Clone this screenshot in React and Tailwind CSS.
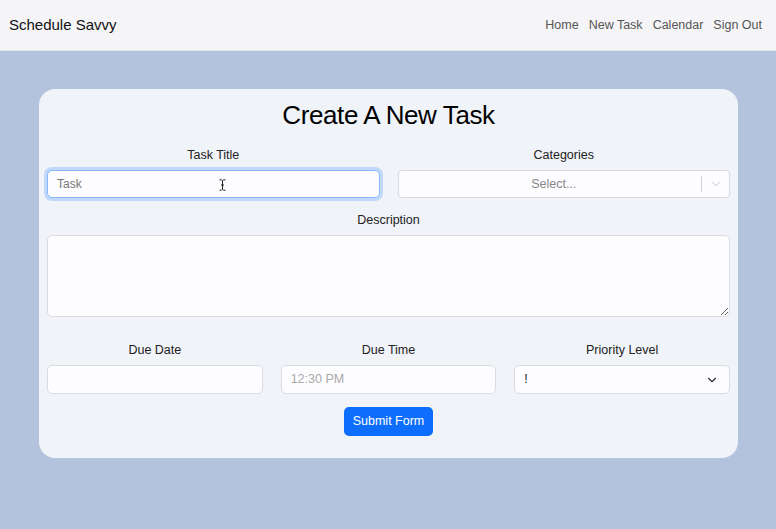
import React from 'react';
import { ChevronDown } from 'lucide-react';

const font = { fontFamily: '"Liberation Sans", Arial, sans-serif' };

function Label({ children }) {
  return <label className="block text-center text-[12.5px] text-[#222] mb-[6px] leading-[18px]">{children}</label>;
}

function IBeam() {
  return (
    <svg width="7" height="12" viewBox="0 0 7 12" className="absolute left-[171px] top-[8px]">
      <path d="M0.5 0.8h2l1 1 1-1h2M3.5 1.8v8.4M0.5 11.2h2l1-1 1 1h2M2 6h3" stroke="#222" strokeWidth="1" fill="none" />
    </svg>
  );
}

export default function App() {
  return (
    <div style={font} className="min-h-[529px] bg-[#b3c3dd]">
      <nav className="h-[51px] bg-[#f5f5f7] flex items-center justify-between pl-[9px] pr-[14px] border-b border-[#e6e6ea]">
        <span className="text-[15px] text-[#111]">Schedule Savvy</span>
        <div className="flex gap-[10px] text-[12.5px] text-[#555]">
          <a>Home</a>
          <a>New Task</a>
          <a>Calendar</a>
          <a>Sign Out</a>
        </div>
      </nav>

      <div className="pl-[39px] pr-[38px] pt-[38px]">
        <div className="bg-[#f0f3f8] rounded-[16px] px-[8px] pt-[8px] pb-[22px]">
          <h1 className="text-center text-[26px] tracking-[-0.4px] text-black leading-[36px] mb-[13px]">Create A New Task</h1>

          <div className="grid grid-cols-2 gap-[18px]">
            <div>
              <Label>Task Title</Label>
              <div className="h-[28px] rounded-[5px] border border-[#86b7fe] bg-[#fdfcff] ring-[3px] ring-[#c2d8fb] flex items-center px-[9px] text-[12px] text-[#777] relative">
                Task
                <IBeam />
              </div>
            </div>
            <div>
              <Label>Categories</Label>
              <div className="h-[28px] rounded-[4px] border border-[#d9d9de] bg-[#fdfcff] flex items-center text-[12.5px] text-[#888]">
                <span className="flex-1 text-center pl-[8px]">Select...</span>
                <span className="w-px h-[16px] bg-[#d0d0d5]" />
                <span className="w-[27px] flex justify-center text-[#bbb]"><ChevronDown size={14} strokeWidth={1.5} /></span>
              </div>
            </div>
          </div>

          <div className="mt-[13px]">
            <Label>Description</Label>
            <textarea className="block w-full h-[82px] rounded-[5px] border border-[#dcdce0] bg-[#fdfcff] resize-y" />
          </div>

          <div className="grid grid-cols-3 gap-[18px] mt-[24px]">
            <div>
              <Label>Due Date</Label>
              <div className="h-[29px] rounded-[5px] border border-[#dcdce0] bg-[#fdfcff]" />
            </div>
            <div>
              <Label>Due Time</Label>
              <div className="h-[29px] rounded-[5px] border border-[#dcdce0] bg-[#fdfcff] flex items-center px-[9px] text-[12.5px] text-[#aaa]">12:30 PM</div>
            </div>
            <div>
              <Label>Priority Level</Label>
              <div className="h-[29px] rounded-[5px] border border-[#dcdce0] bg-[#fdfcff] flex items-center justify-between pl-[9px] pr-[10px] text-[12.5px] text-[#222]">
                <span>!</span>
                <ChevronDown size={14} strokeWidth={2} className="text-[#333]" />
              </div>
            </div>
          </div>

          <div className="flex justify-center mt-[13px]">
            <button className="h-[29px] px-[9px] rounded-[5px] bg-[#0d6efd] text-white text-[12.5px]">Submit Form</button>
          </div>
        </div>
      </div>
    </div>
  );
}
